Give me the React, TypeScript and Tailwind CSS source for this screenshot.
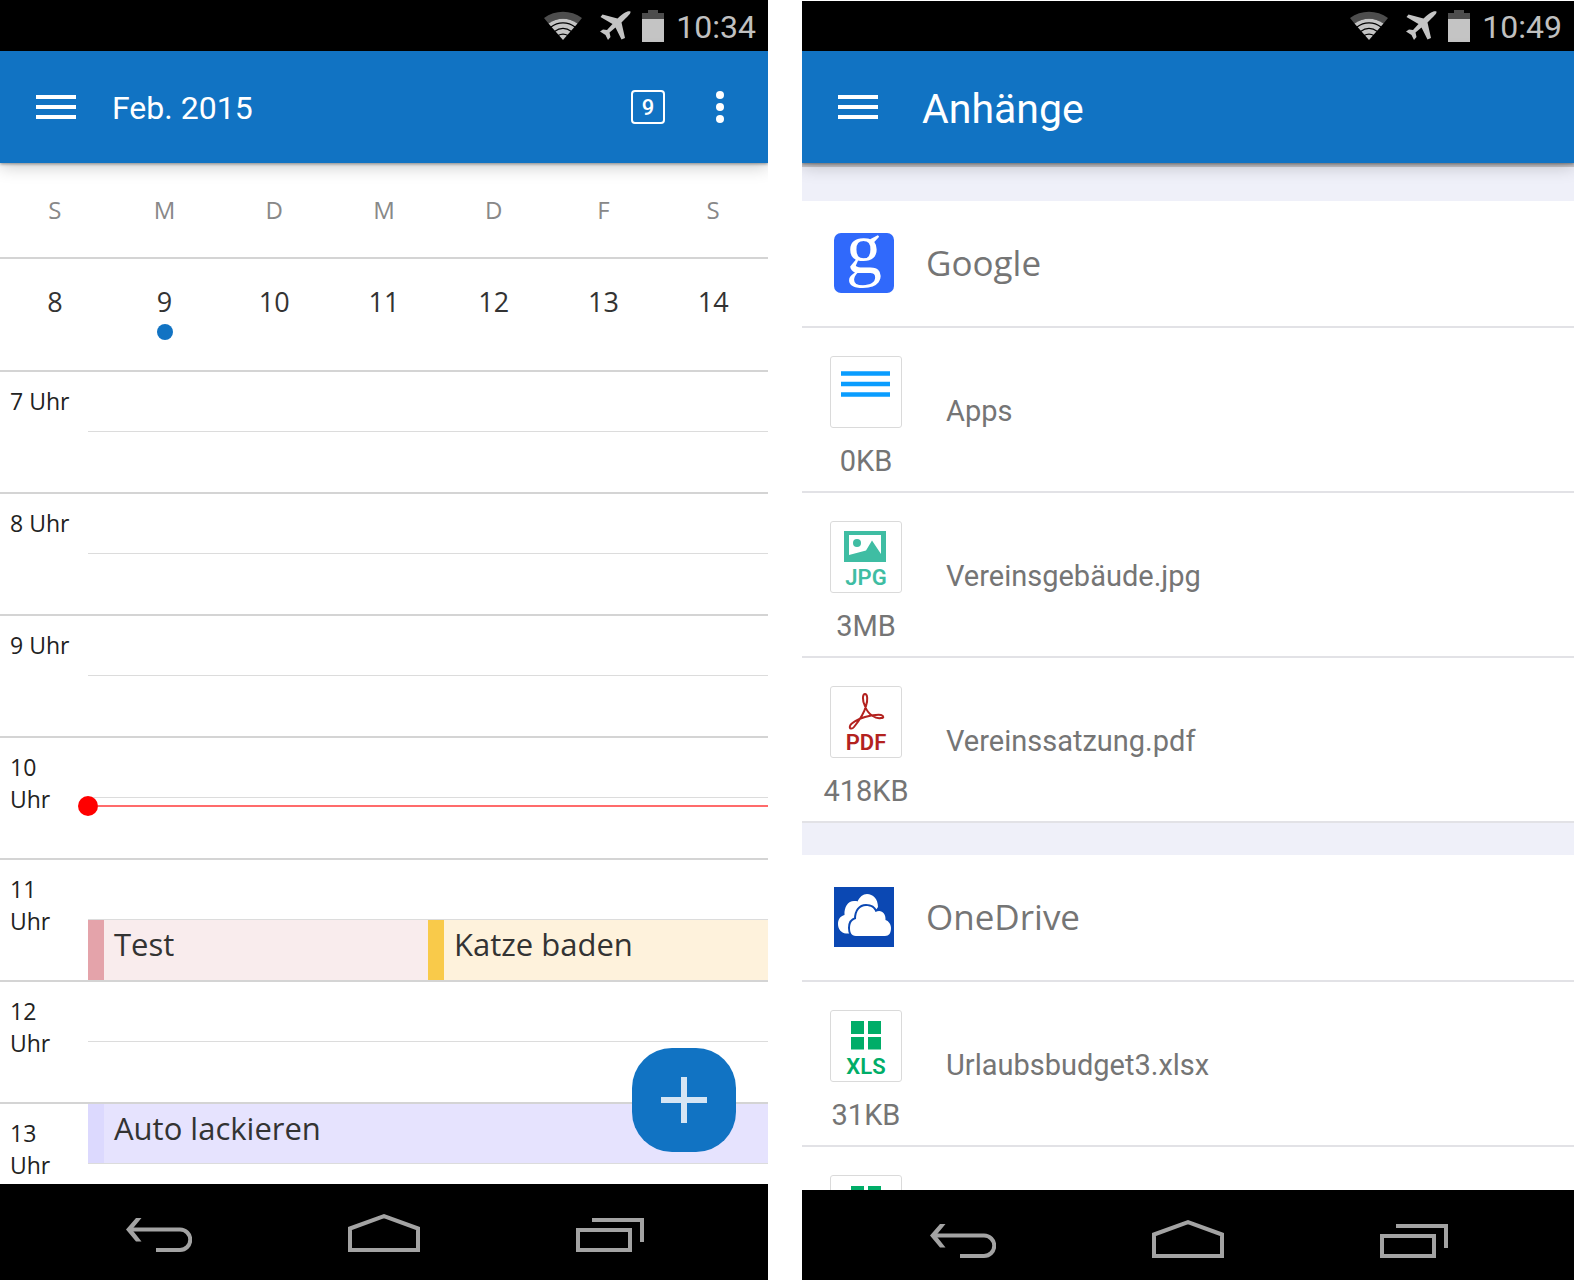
import { ReactNode } from "react";
import clsx from "clsx";

interface CalendarEvent {
  title: string;
  bar: string;
  fill: string;
}

interface Hour {
  hour: number;
  firstHalf?: CalendarEvent[];
  secondHalf?: CalendarEvent[];
  now?: boolean;
}

const weekdays = ["S", "M", "D", "M", "D", "F", "S"];
const days = [8, 9, 10, 11, 12, 13, 14];
const today = 9;

const hours: Hour[] = [
  { hour: 7 },
  { hour: 8 },
  { hour: 9 },
  { hour: 10, now: true },
  {
    hour: 11,
    secondHalf: [
      { title: "Test", bar: "bg-[#e4a3aa]", fill: "bg-[#f9eced]" },
      { title: "Katze baden", bar: "bg-[#f9ca4a]", fill: "bg-[#fef2dc]" },
    ],
  },
  { hour: 12 },
  {
    hour: 13,
    firstHalf: [
      { title: "Auto lackieren", bar: "bg-[#dcd9fe]", fill: "bg-[#e6e3fe]" },
    ],
  },
];

type FileKind = "folder" | "jpg" | "pdf" | "xls";

const googleFiles: { name: string; size: string; kind: FileKind }[] = [
  { name: "Apps", size: "0KB", kind: "folder" },
  { name: "Vereinsgebäude.jpg", size: "3MB", kind: "jpg" },
  { name: "Vereinssatzung.pdf", size: "418KB", kind: "pdf" },
];

function StatusBar({ time, className }: { time: string; className: string }) {
  return (
    <div
      className={clsx(
        "flex shrink-0 items-center justify-end bg-black pr-3 text-[32px] leading-8 text-[#c0c0c0]",
        className
      )}
    >
      <svg className="mr-4 h-8 w-10" viewBox="0 0 40 32" fill="#c4c4c4">
        <path d="M1 8C12-0.5 28-0.5 39 8L34.5 13.5C26 7 14 7 5.5 13.5Z" fill="#4d4d4d" />
        <path d="M20 30L5.5 13.5C14 7 26 7 34.5 13.5Z" />
        <path
          d="M8 17C15 11.5 25 11.5 32 17M11.5 21.5C17 17.5 23 17.5 28.5 21.5M15 25.5C18.5 23.5 21.5 23.5 25 25.5"
          fill="none"
          stroke="#000"
          strokeWidth="1.2"
        />
      </svg>
      <svg className="mr-[11px] h-8 w-8" viewBox="0 0 32 32" fill="#c4c4c4">
        <path d="M31.5 1.5C32 3.5 29 6 22.5 12.5L26 28L22.5 29.5L16.5 17.5L10.5 22.5L11.5 27L9 30L6.5 25L1 21.5L4 19.5L8 20L13.5 14L1.5 7L3.5 4.5L18.5 8.5C25 2 29 0.5 31.5 1.5Z" />
      </svg>
      <svg className="mr-3 h-8 w-[22px]" viewBox="0 0 22 32">
        <path d="M6 0H16V3H22V9H0V3H6Z" fill="#4d4d4d" />
        <path d="M0 9H22V32H0Z" fill="#c4c4c4" />
      </svg>
      <span className="pt-0.5">{time}</span>
    </div>
  );
}

function AppBar({ children }: { children: ReactNode }) {
  return (
    <header className="relative z-10 flex h-28 shrink-0 items-center bg-[#1173c3] px-9 text-white shadow-[0_1px_3px_rgba(0,0,0,0.4),0_4px_16px_rgba(0,0,0,0.2)]">
      <button aria-label="Menü" className="flex w-10 flex-col gap-1.5">
        <span className="h-1 w-full bg-white" />
        <span className="h-1 w-full bg-white" />
        <span className="h-1 w-full bg-white" />
      </button>
      {children}
    </header>
  );
}

function NavBar({ className }: { className: string }) {
  return (
    <nav className={clsx("shrink-0 overflow-hidden bg-black pt-[30px] pl-0.5", className)}>
      <div className="flex items-end justify-center gap-[156px]">
        <button aria-label="Zurück">
          <svg className="block h-[34px] w-[66px]" viewBox="0 0 66 34">
            <path d="M4 11.5H54a10 10 0 0 1 0 20.5H30" fill="none" stroke="#a3a3a3" strokeWidth="4" />
            <path d="M0 11.5L10 0H15.5L6 11.5L15.5 23.5H10Z" fill="#a3a3a3" />
          </svg>
        </button>
        <button aria-label="Startseite">
          <svg className="block h-[38px] w-[72px]" viewBox="0 0 72 38" fill="none" stroke="#a3a3a3" strokeWidth="4">
            <path d="M2 14.5L36 2.2L70 14.5V36H2Z" />
          </svg>
        </button>
        <button aria-label="Letzte Apps">
          <svg className="block h-[34px] w-[68px]" viewBox="0 0 68 34" fill="none" stroke="#a3a3a3" strokeWidth="4">
            <path d="M2 12H54V32H2ZM16 2H66V24" />
          </svg>
        </button>
      </div>
    </nav>
  );
}

function HalfHour({ events = [], second }: { events?: CalendarEvent[]; second?: boolean }) {
  return (
    <div className={clsx("flex", second ? "h-[61px] border-t border-[#dcdcdc]" : "h-[59px]")}>
      {events.map((event) => (
        <div key={event.title} className={clsx("flex flex-1", event.fill)}>
          <div className={clsx("w-4", event.bar)} />
          <p className="truncate pt-1 pl-2.5 text-[31px] leading-10 text-[#333]">{event.title}</p>
        </div>
      ))}
    </div>
  );
}

function CalendarScreen() {
  return (
    <section className="flex flex-col overflow-hidden bg-white">
      <StatusBar time="10:34" className="h-[51px]" />
      <AppBar>
        <h1 className="ml-9 flex-1 pt-0.5 text-[32px] leading-10">Feb. 2015</h1>
        <button
          aria-label="Heute"
          className="mr-[51px] flex h-[34px] w-[34px] items-center justify-center rounded border-2 border-white pt-0.5 text-[22px] leading-6 font-medium"
        >
          9
        </button>
        <button aria-label="Mehr" className="mr-2 flex flex-col gap-1">
          <span className="h-2 w-2 rounded-full bg-white" />
          <span className="h-2 w-2 rounded-full bg-white" />
          <span className="h-2 w-2 rounded-full bg-white" />
        </button>
      </AppBar>

      <main className="relative min-h-0 flex-1 overflow-hidden font-['Open_Sans','Noto_Sans',sans-serif]">
        <div className="grid h-24 grid-cols-7 items-center border-b-2 border-[#d4d4d4] text-center text-2xl text-[#888]">
          {weekdays.map((day, i) => (
            <span key={i}>{day}</span>
          ))}
        </div>
        <div className="grid h-[111px] grid-cols-7 pt-[23px] text-[27px] leading-10 text-[#333]">
          {days.map((day) => (
            <div key={day} className="flex flex-col items-center gap-0.5">
              {day}
              {day === today && <span className="h-4 w-4 rounded-full bg-[#1173c3]" />}
            </div>
          ))}
        </div>

        {hours.map(({ hour, firstHalf, secondHalf, now }) => (
          <div key={hour} className="relative flex border-t-2 border-[#d4d4d4]">
            <p className="w-[88px] pt-[13px] pr-3 pl-2.5 text-[23px] leading-8 text-[#222]">{hour} Uhr</p>
            <div className="flex-1">
              <HalfHour events={firstHalf} />
              <HalfHour events={secondHalf} second />
            </div>
            {now && (
              <div className="absolute top-[58px] right-0 left-[78px] flex items-center">
                <span className="h-5 w-5 rounded-full bg-[#f00]" />
                <span className="h-0.5 flex-1 bg-[#ff6b6b]" />
              </div>
            )}
          </div>
        ))}

        <button
          aria-label="Neuer Termin"
          className="absolute right-8 bottom-8 flex h-[104px] w-[104px] items-center justify-center rounded-[40px] bg-[#1173c3]"
        >
          <svg className="h-[46px] w-[46px]" viewBox="0 0 46 46" stroke="#d5e5f4" strokeWidth="6">
            <path d="M23 0V46M0 23H46" />
          </svg>
        </button>
      </main>
      <NavBar className="h-24" />
    </section>
  );
}

function FileIcon({ kind, labelled = true }: { kind: FileKind; labelled?: boolean }) {
  return (
    <svg
      className="h-[72px] w-[72px] shrink-0"
      viewBox="0 0 72 72"
      textAnchor="middle"
      fontSize="22"
      fontWeight="600"
    >
      <rect x="0.5" y="0.5" width="71" height="71" rx="2.5" fill="#fff" stroke="#dadada" />
      {kind === "folder" && <path d="M11 17.5H60M11 28H60M11 38.5H60" stroke="#0a9dff" strokeWidth="4.5" />}
      {kind === "jpg" && (
        <g fill="#3fbda3">
          <path d="M14 10H56V41H14ZM19 14V34L36 29.5L42 19.5L51 33V14Z" fillRule="evenodd" />
          <circle cx="27" cy="22" r="4" />
        </g>
      )}
      {kind === "pdf" && (
        <path
          d="M35 20C32 14 32.5 8 35 8C37.5 8 38 14 36 20C34 28 28 36 24 41C22 43.5 19 43 20 40C21 37 28 33 35 31C41 29.5 48 28.5 51 29C54 30 54 32 51 32C46 33 38 29 35 20Z"
          fill="none"
          stroke="#b3221f"
          strokeWidth="2"
        />
      )}
      {kind === "xls" && (
        <path d="M21 11H34V24H21ZM38 11H51V24H38ZM21 27H34V39.5H21ZM38 27H51V39.5H38Z" fill="#00ad68" />
      )}
      {labelled && kind !== "folder" && (
        <text
          x="36"
          y="64"
          className={clsx(
            kind === "jpg" && "fill-[#3fbda3]",
            kind === "pdf" && "fill-[#b3221f]",
            kind === "xls" && "fill-[#00ad68]"
          )}
        >
          {kind.toUpperCase()}
        </text>
      )}
    </svg>
  );
}

function FileRow({ name, size, kind }: { name: string; size: string; kind: FileKind }) {
  return (
    <li className="flex h-[165px] border-b-2 border-[#e2e2e6] text-[29px] leading-9 text-[#757575]">
      <div className="flex w-32 flex-col items-center gap-[15px] pt-7">
        <FileIcon kind={kind} />
        <span>{size}</span>
      </div>
      <a href="#" className="ml-4 pt-[65px]">
        {name}
      </a>
    </li>
  );
}

function GroupHeader({ title, icon }: { title: string; icon: ReactNode }) {
  return (
    <div className="flex h-[127px] items-center gap-8 border-b-2 border-[#e2e2e6] px-8 pb-0.5">
      {icon}
      <h2 className="font-['Open_Sans','Noto_Sans',sans-serif] text-[35px] leading-10 text-[#757575]">{title}</h2>
    </div>
  );
}

function GoogleIcon() {
  return (
    <svg className="h-[60px] w-[60px] overflow-visible" viewBox="0 0 60 60">
      <rect width="60" height="60" rx="7" fill="#3069fb" />
      <text
        x="30"
        y="40"
        textAnchor="middle"
        fontSize="72"
        fill="#fff"
        fontFamily="'Liberation Serif', serif"
      >
        g
      </text>
    </svg>
  );
}

function OneDriveIcon() {
  return (
    <svg className="h-[60px] w-[60px]" viewBox="0 0 60 60" fill="#fff">
      <rect width="60" height="60" fill="#0b48b3" />
      <path d="M15 46.5H12C7 46 4 42 4 37C4 32 6.5 29 10.5 28C10 20 14 14 20 14C22 14 23 14 23.5 14.5C25.5 10 29 7 33 7C39 7 44 12 44 20L30 40Z" />
      <path
        d="M22 49C17 49 16 45 16 41C16 36 18 33 22 32C22 24 26 19 32 19C37 19 40 21 41.5 25C47 22 52 26 51.5 33C54.5 34 57 37 57 41C57 46 55 49 51 49Z"
        stroke="#0b48b3"
        strokeWidth="4"
        paintOrder="stroke"
      />
    </svg>
  );
}

function AttachmentsScreen() {
  return (
    <section className="flex flex-col overflow-hidden border-t border-white bg-white">
      <StatusBar time="10:49" className="h-[50px]" />
      <AppBar>
        <h1 className="ml-11 pt-1 text-[41px] leading-[48px]">Anhänge</h1>
      </AppBar>
      <main className="min-h-0 flex-1 overflow-hidden">
        <div className="h-[38px] border-t-4 border-[#c9c8cd] bg-[#eff0f9]" />
        <GroupHeader title="Google" icon={<GoogleIcon />} />
        <ul>
          {googleFiles.map((file) => (
            <FileRow key={file.name} {...file} />
          ))}
        </ul>
        <div className="h-8 bg-[#eff0f9]" />
        <GroupHeader title="OneDrive" icon={<OneDriveIcon />} />
        <ul>
          <FileRow name="Urlaubsbudget3.xlsx" size="31KB" kind="xls" />
          <li className="flex w-32 justify-center pt-7">
            <FileIcon kind="xls" labelled={false} />
          </li>
        </ul>
      </main>
      <NavBar className="h-[90px]" />
    </section>
  );
}

export default function App() {
  return (
    <div className="grid h-screen grid-cols-[768fr_772fr] grid-rows-1 gap-x-[34px] overflow-hidden bg-white font-[Roboto,sans-serif]">
      <CalendarScreen />
      <AttachmentsScreen />
    </div>
  );
}
